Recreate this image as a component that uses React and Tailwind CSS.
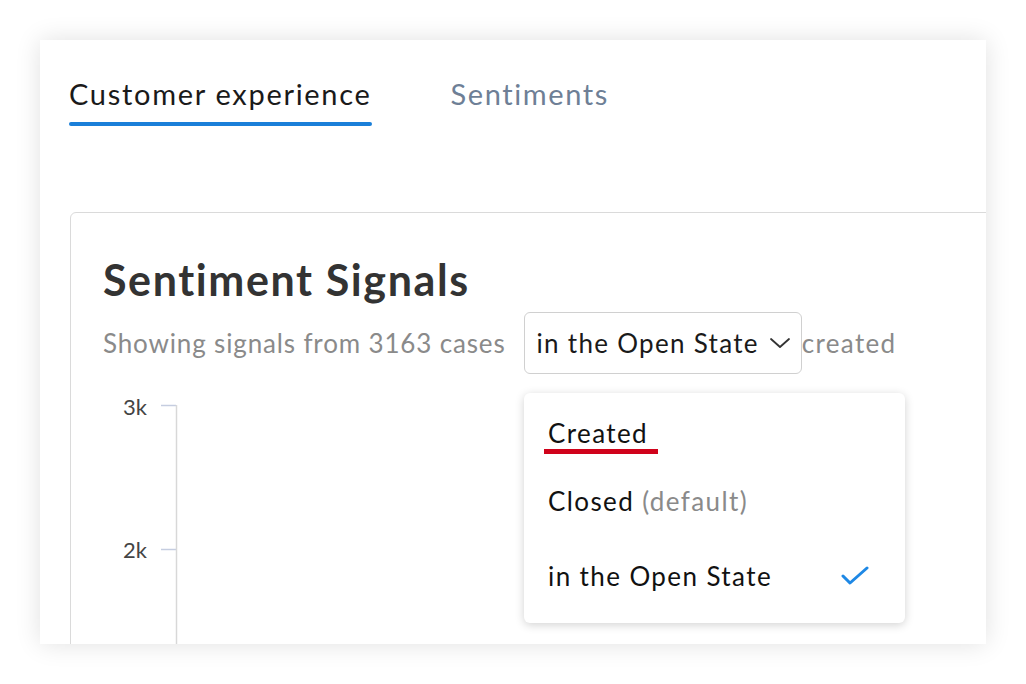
import React from 'react';

const Chevron = () => (
    <svg width="22" height="14" viewBox="0 0 22 14" className="ml-[10px]" fill="none">
        <polyline points="2,3 11,11 20,3" stroke="#333" strokeWidth="1.8" strokeLinecap="round" strokeLinejoin="round" />
    </svg>
);

const Check = () => (
    <svg width="28" height="20" viewBox="0 0 28 20" fill="none">
        <polyline points="2,10 9,17 26,2" stroke="#1e88e5" strokeWidth="3" strokeLinecap="round" strokeLinejoin="round" />
    </svg>
);

const App = () => {
    return (
        <div className="min-h-screen bg-white p-10 font-['Lato',sans-serif]">
            <div className="relative h-[604px] w-[946px] overflow-hidden bg-white shadow-[0_0_24px_rgba(0,0,0,0.12)]">
                {/* tabs */}
                <div className="flex gap-[79px] pl-[29px] pt-[39px]">
                    <div className="flex flex-col">
                        <span className="text-[29px] leading-none tracking-[1.7px] text-[#1a1a1a]">Customer experience</span>
                        <span className="mt-[14px] h-[4px] rounded-full bg-[#1a7fd9]" />
                    </div>
                    <span className="text-[29px] leading-none tracking-[1.6px] text-[#6e7f96]">Sentiments</span>
                </div>

                {/* panel */}
                <div className="relative ml-[30px] mt-[86px] h-[500px] w-[1000px] rounded-tl-md border border-[#dadada] pl-[32px] pt-[45px]">
                    <h1 className="text-[43px] font-bold leading-none tracking-[1.6px] text-[#333]">Sentiment Signals</h1>

                    <div className="mt-[11px] flex items-center text-[26px] leading-none">
                        <span className="mr-[18px] tracking-[0.85px] text-[#8a8a8a]">Showing signals from 3163 cases</span>
                        <div className="flex h-[62px] items-center rounded-md border border-[#d0d0d0] pl-[12px] pr-[10px] tracking-[1.3px] text-[#1a1a1a]">
                            in the Open State
                            <Chevron />
                        </div>
                        <span className="tracking-[1.3px] text-[#8a8a8a]">created</span>
                    </div>

                    {/* chart axis */}
                    <div className="relative mt-[24px] h-[260px] w-[200px]">
                        <span className="absolute left-[20px] top-[-2px] text-[22px] leading-none text-[#444]">3k</span>
                        <span className="absolute left-[20px] top-[141px] text-[22px] leading-none text-[#444]">2k</span>
                        <svg className="absolute left-0 top-0" width="200" height="260">
                            <line x1="58" y1="7.5" x2="73" y2="7.5" stroke="#c5cde0" strokeWidth="1.5" />
                            <line x1="58" y1="151.5" x2="73" y2="151.5" stroke="#c5cde0" strokeWidth="1.5" />
                            <line x1="73.5" y1="7" x2="73.5" y2="260" stroke="#d8d8d8" strokeWidth="1.5" />
                        </svg>
                    </div>

                    {/* dropdown menu */}
                    <div className="absolute left-[453px] top-[180px] w-[381px] rounded-md bg-white pb-[34px] pl-[24px] pr-[36px] pt-[27px] text-[26px] leading-none tracking-[1.4px] text-[#111] shadow-[0_2px_10px_rgba(0,0,0,0.18)]">
                        <div className="relative">
                            Created
                            <span className="absolute left-[-4px] top-[29px] h-[5px] w-[114px] bg-[#d0021b]" />
                        </div>
                        <div className="mt-[42px]">
                            Closed <span className="text-[#8a8a8a]">(default)</span>
                        </div>
                        <div className="mt-[49px] flex items-center justify-between">
                            <span>in the Open State</span>
                            <Check />
                        </div>
                    </div>
                </div>
            </div>
        </div>
    );
};

export default App;
